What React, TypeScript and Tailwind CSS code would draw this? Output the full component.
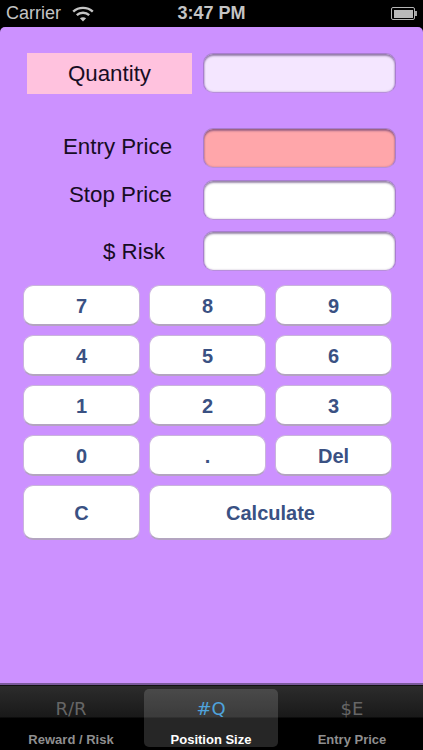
const font = "font-['Liberation_Sans',Arial,sans-serif]";

const inputBase =
  "h-10 w-[193px] rounded-[10px] border border-[#a87dd0] border-b-[#b88fdc] shadow-[inset_0_2px_2px_rgba(70,40,100,0.5),inset_0_0_2px_rgba(70,40,100,0.35)]";

const Key = ({ label, className }: { label: string; className: string }) => (
  <button
    className={`rounded-[10px] bg-white border border-[#c9b4dc] border-b-2 border-b-[#b3a4c0] pt-[2px] text-[20px] font-bold text-[#3a5183] ${className}`}
  >
    {label}
  </button>
);

const Wifi = () => (
  <svg width="22" height="16" viewBox="0 0 22 16" fill="none" stroke="#c4c4c4" strokeWidth="2.4">
    <path d="M1.2 5.6C6.6 0.6 15.4 0.6 20.8 5.6" />
    <path d="M4.8 9.2C8.2 6 13.8 6 17.2 9.2" />
    <path d="M11 15.6L7.9 12.3C9.6 10.8 12.4 10.8 14.1 12.3Z" fill="#c4c4c4" stroke="none" />
  </svg>
);

const Battery = () => (
  <div className="flex items-center">
    <div className="w-[24px] h-[13px] rounded-[2px] border border-[#b5b5b5] p-[1.5px]">
      <div className="h-full w-full bg-[#b9b9b9]" />
    </div>
    <div className="w-[2px] h-[5px] bg-[#a5a5a5]" />
  </div>
);

const Tab = ({ icon, label, active, className }: { icon: string; label: string; active?: boolean; className?: string }) => (
  <div
    className={`w-[134px] h-[58px] rounded-[5px] flex flex-col items-center ${
      active ? "bg-white/15" : ""
    } ${className ?? ""}`}
  >
    <span
      className={`mt-[6px] h-[28px] leading-[28px] text-[18px] ${
        active ? "text-[#4fa3dc]" : "text-[#666666]"
      } font-['DejaVu_Sans',sans-serif]`}
    >
      {icon}
    </span>
    <span
      className={`mt-[9px] leading-[16px] text-[13px] font-bold ${
        active ? "text-white" : "text-[#8f8f8f]"
      }`}
    >
      {label}
    </span>
  </div>
);

export default function App() {
  return (
    <div className={`${font} w-[423px] h-[750px] bg-black flex flex-col overflow-hidden`}>
      <div className="h-[27px] shrink-0 pl-[6px] pr-[6px] flex items-center justify-between text-[18px] text-[#c4c4c4]">
        <div className="flex items-center gap-[11px] w-[110px]">
          <span>Carrier</span>
          <Wifi />
        </div>
        <span className="font-bold text-[18px]">3:47 PM</span>
        <div className="w-[110px] flex justify-end">
          <Battery />
        </div>
      </div>

      <div className="h-[658px] shrink-0 bg-[#cc91ff] rounded-t-[5px] border-b-2 border-b-[#7a5a9a] text-[22.3px] text-[#170c24]">
        <div className="flex items-start mt-[26px] ml-[27px] gap-[11px]">
          <div className="w-[165px] h-[41px] bg-[#ffc2de] flex items-center justify-center">Quantity</div>
          <div className={`${inputBase} bg-[#f4e6ff]`} />
        </div>

        <div className="flex items-center mt-[34px] ml-[63px]">
          <span className="w-[140px] leading-[28px] pb-[2px]">Entry Price</span>
          <div className={`${inputBase} bg-[#ffa6aa]`} />
        </div>
        <div className="flex items-center mt-[12px] ml-[69px]">
          <span className="w-[134px] leading-[28px] pb-[11px]">Stop Price</span>
          <div className={`${inputBase} bg-white`} />
        </div>
        <div className="flex items-center mt-[11px] ml-[103px]">
          <span className="w-[100px] leading-[28px] pt-[2px]">$ Risk</span>
          <div className={`${inputBase} bg-white`} />
        </div>

        <div className="grid grid-cols-[117px_117px_117px] gap-x-[9px] gap-y-[9px] mt-[14px] ml-[23px]">
          {["7", "8", "9", "4", "5", "6", "1", "2", "3", "0", ".", "Del"].map((k) => (
            <Key key={k} label={k} className="h-[41px]" />
          ))}
          <Key label="C" className="h-[55px]" />
          <Key label="Calculate" className="h-[55px] col-span-2" />
        </div>
      </div>

      <div className="flex-1 pt-[3px] flex gap-[7px] pl-[3px] border-t border-t-[#111111] bg-[linear-gradient(to_bottom,#2c2c2c_0px,#191919_31px,#000000_32px)]">
        <Tab icon="R/R" label="Reward / Risk" className="pl-[2px]" />
        <Tab icon="#Q" label="Position Size" active />
        <Tab icon="$E" label="Entry Price" />
      </div>
    </div>
  );
}
